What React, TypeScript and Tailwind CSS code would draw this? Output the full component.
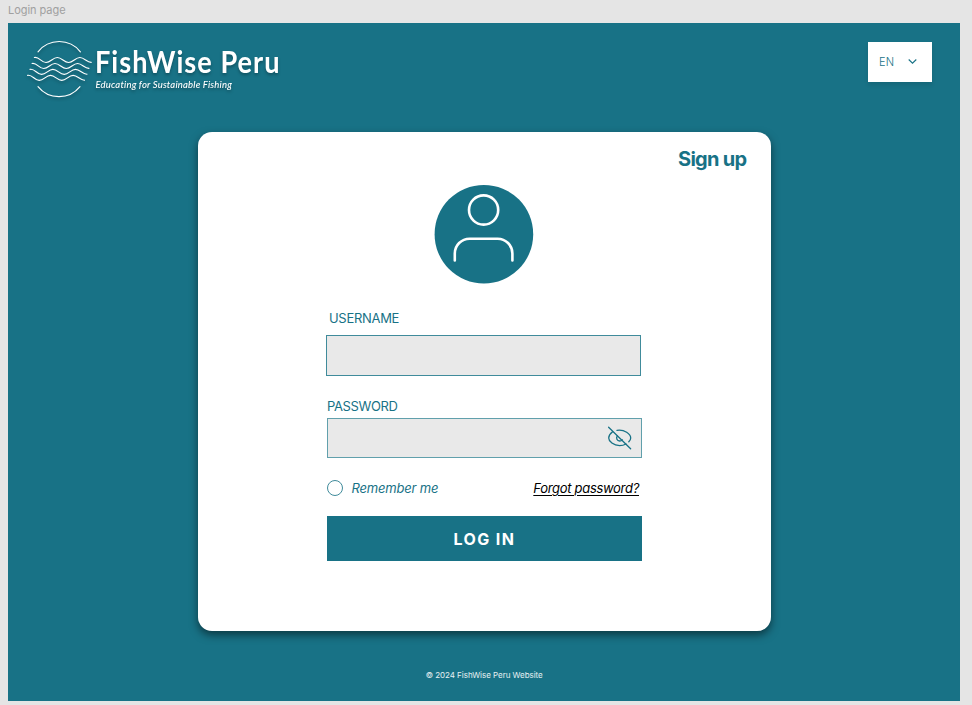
const wave = 'c4.5 -1.2 7 5 11.6 5 s6.8 -5 11.3 -5 s6.8 5 11.3 5 s6.8 -5 11.3 -5 s7 5 11.4 4.8';

function Logo() {
  return (
    <div className="flex drop-shadow-[0_2px_1.5px_rgba(0,0,0,0.28)]">
      <svg className="h-[60px] w-[68px] shrink-0" viewBox="26 39 68 60" fill="none" stroke="#fff" strokeWidth="1.15" strokeLinecap="round">
        <path d="M38 51.8A27 27 0 0 1 80.4 51.8M38 86.6A27 27 0 0 0 80 86.6" />
        <path d={'M34.4 57.5' + wave} />
        <path d={'M32.1 63.5' + wave} />
        <path d={'M30 69.4' + wave} />
        <path d={'M27.6 75.4' + wave} />
      </svg>
      <div className="flex w-[190px] flex-col pl-[1.4px] pt-[5.4px] font-['Lato',sans-serif] text-white whitespace-nowrap">
        <div className="h-[35px] w-[210px] origin-left scale-x-[0.875] text-[31px] leading-[35px] font-bold tracking-[1.15px]">FishWise Peru</div>
        <div className="text-[9.5px] leading-[11px] font-medium italic tracking-[0.18px]">Educating for Sustainable Fishing</div>
      </div>
    </div>
  );
}

function Avatar() {
  return (
    <svg className="h-[100px] w-[100px]" viewBox="434 184 100 100" fill="none">
      <circle cx="483.9" cy="234.2" r="49.3" fill="#187286" />
      <g stroke="#fff" strokeWidth="2.6" strokeLinecap="round">
        <circle cx="483.6" cy="210" r="14.6" />
        <path d="M454.8 260.4V253.5A14.8 14.8 0 0 1 469.6 238.7H497.6A14.8 14.8 0 0 1 512.4 253.5V260.4" />
      </g>
    </svg>
  );
}

function EyeOff() {
  return (
    <svg className="h-6 w-6" viewBox="608 426 24 24" fill="none" stroke="#187286" strokeWidth="1.3" strokeLinecap="round">
      <path d="M608.6 427.2L630.6 448.8" />
      <path d="M612.6 431.8C610 433.8 608.7 436 608.7 438C608.7 441.4 613.6 445.6 619.6 445.6C622 445.6 624.2 445 626 444" />
      <path d="M617 430.3C624.5 429.2 630.7 434 630.7 438C630.7 439.2 630 440.6 628.8 441.8" />
      <path d="M617.3 436C615.8 438 617 441 619.6 441C620.8 441 621.7 440.5 622.2 439.8" />
    </svg>
  );
}

export default function App() {
  return (
    <div className="h-[705px] w-[972px] overflow-hidden bg-[#e5e5e5] pl-2 font-['Inter',sans-serif] text-[#187286]">
      <div className="h-[23.4px] pt-[3px] text-[11px] leading-[15px] tracking-[-0.05px] text-[#a0a0a0]">Login page</div>
      <main className="flex h-[677.2px] w-[952.4px] flex-col bg-[#187286]">
        <header className="flex h-[108.6px] items-start justify-between pl-[18px] pr-7 pt-[15.6px]">
          <Logo />
          <button className="mt-[3px] flex h-[40px] w-16 items-center justify-between bg-white pl-[10.5px] pr-[15px] text-[11px] shadow-[0_3px_4px_rgba(0,0,0,0.1)]">
            <span className="font-light tracking-[0.3px]">EN</span>
            <svg className="h-[5px] w-[9px]" viewBox="0 0 9 5" fill="none" stroke="#187286" strokeWidth="1.1"><path d="M.7 .5L4.5 4.2L8.3 .5" /></svg>
          </button>
        </header>
        <section className="ml-[190px] flex h-[498.6px] w-[572.5px] flex-col rounded-[14px] bg-white shadow-[0_4px_8px_rgba(0,0,0,0.5)]">
          <a className="mr-6 mt-[13px] self-end text-[20px] leading-7 font-bold tracking-[-0.7px]">Sign up</a>
          <div className="ml-[236px] mt-[11px] h-[100px]"><Avatar /></div>
          <form className="ml-32 flex w-[317px] flex-col">
            <label className="ml-[3px] mt-[26px] text-[13px] leading-4 tracking-[-0.3px]">USERNAME</label>
            <div className="mt-[9px] h-[41px] w-[315px] border border-[#408b9b] bg-[#e9e9e9]" />
            <label className="ml-px mt-[22px] text-[13px] leading-4 tracking-[-0.38px]">PASSWORD</label>
            <div className="ml-px mt-1 flex h-10 w-[315px] items-center justify-end border border-[#61a0ac] bg-[#e9e9e9] pr-[9.5px]"><EyeOff /></div>
            <div className="ml-[1.4px] mt-[22px] flex h-[17px] items-center justify-between pr-[4px] text-[13px] italic">
              <label className="flex items-center gap-2 tracking-[-0.18px]">
                <span className="h-4 w-4 rounded-full border border-[#408b9b]" />
                Remember me
              </label>
              <a className="tracking-[-0.3px] text-black underline decoration-1 underline-offset-2">Forgot password?</a>
            </div>
            <button type="button" className="ml-[1.4px] mt-[19.4px] h-[45px] w-[315px] bg-[#187286] pr-px text-[16px] font-bold tracking-[1.4px] text-white">LOG IN</button>
          </form>
        </section>
        <footer className="mt-[38px] text-center text-[8px] leading-3 tracking-[-0.03px] text-white/90">© 2024 FishWise Peru Website</footer>
      </main>
    </div>
  );
}
